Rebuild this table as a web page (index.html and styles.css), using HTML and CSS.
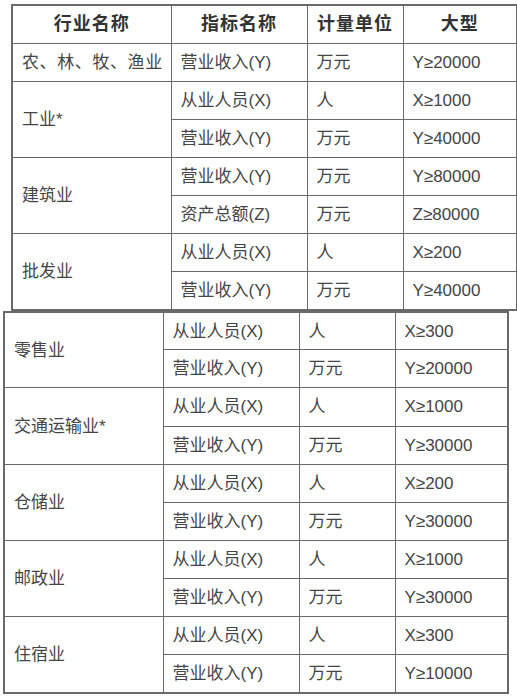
FILE: index.html
```html
<!DOCTYPE html>
<html lang="zh">
<head>
<meta charset="utf-8">
<link rel="stylesheet" href="styles.css">
</head>
<body>
<div class="page">
<table class="grid grid-top">
  <colgroup><col class="c1"><col class="c2"><col class="c3"><col class="c4a"></colgroup>
  <tr class="head"><th>行业名称</th><th>指标名称</th><th>计量单位</th><th>大型</th></tr>
  <tr><td class="spaced">农、林、牧、渔业</td><td>营业收入(Y)</td><td>万元</td><td>Y≥20000</td></tr>
  <tr><td rowspan="2">工业*</td><td>从业人员(X)</td><td>人</td><td>X≥1000</td></tr>
  <tr><td>营业收入(Y)</td><td>万元</td><td>Y≥40000</td></tr>
  <tr><td rowspan="2">建筑业</td><td>营业收入(Y)</td><td>万元</td><td>Y≥80000</td></tr>
  <tr><td>资产总额(Z)</td><td>万元</td><td>Z≥80000</td></tr>
  <tr><td rowspan="2">批发业</td><td>从业人员(X)</td><td>人</td><td>X≥200</td></tr>
  <tr><td>营业收入(Y)</td><td>万元</td><td>Y≥40000</td></tr>
</table>
<table class="grid grid-bottom">
  <colgroup><col class="c1"><col class="c2"><col class="c3"><col class="c4b"></colgroup>
  <tr><td rowspan="2">零售业</td><td>从业人员(X)</td><td>人</td><td>X≥300</td></tr>
  <tr><td>营业收入(Y)</td><td>万元</td><td>Y≥20000</td></tr>
  <tr><td rowspan="2">交通运输业*</td><td>从业人员(X)</td><td>人</td><td>X≥1000</td></tr>
  <tr><td>营业收入(Y)</td><td>万元</td><td>Y≥30000</td></tr>
  <tr><td rowspan="2">仓储业</td><td>从业人员(X)</td><td>人</td><td>X≥200</td></tr>
  <tr><td>营业收入(Y)</td><td>万元</td><td>Y≥30000</td></tr>
  <tr><td rowspan="2">邮政业</td><td>从业人员(X)</td><td>人</td><td>X≥1000</td></tr>
  <tr><td>营业收入(Y)</td><td>万元</td><td>Y≥30000</td></tr>
  <tr><td rowspan="2">住宿业</td><td>从业人员(X)</td><td>人</td><td>X≥300</td></tr>
  <tr><td>营业收入(Y)</td><td>万元</td><td>Y≥10000</td></tr>
</table>
</div>
</body>
</html>
```
FILE: styles.css
```css
html, body {
  margin: 0;
  padding: 0;
  background: #ffffff;
}

.page {
  display: flex;
  flex-direction: column;
  align-items: flex-start;
  padding-top: 4px;
}

.grid {
  border-collapse: collapse;
  table-layout: fixed;
  font-family: "Liberation Sans", "Noto Sans CJK SC", sans-serif;
  font-size: 17px;
  color: #454545;
  border: 2px solid #6a6a6a;
}

.grid-top {
  width: 505px;
  margin-left: 11px;
}

.grid-bottom {
  width: 504px;
  margin-left: 3px;
  margin-top: 0;
}

.c1 { width: 159px; }
.c2 { width: 136px; }
.c3 { width: 96px; }
.c4a { width: 114px; }
.c4b { width: 113px; }

.grid tr {
  height: 38.1px;
}

.grid td,
.grid th {
  border: 1px solid #6a6a6a;
  padding: 1px 0 0 9px;
  text-align: left;
  vertical-align: middle;
  white-space: nowrap;
  line-height: 20px;
}

.grid th {
  font-size: 18px;
  font-weight: bold;
  color: #333333;
  text-align: center;
  padding: 0;
  letter-spacing: 1px;
}

.grid td.spaced {
  letter-spacing: 0.6px;
}
```
